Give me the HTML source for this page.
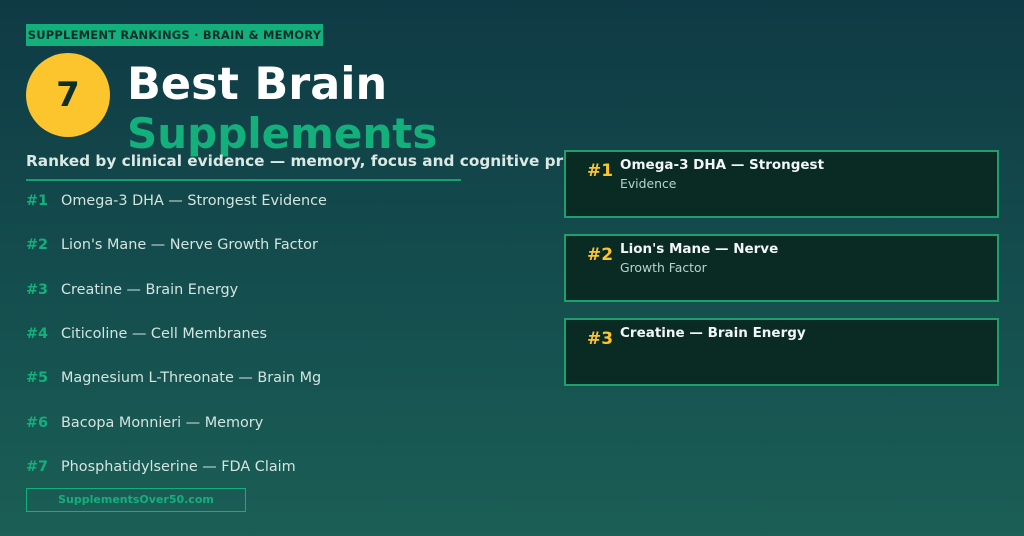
<!DOCTYPE html>
<html><head><style>
body{margin:0;width:1024px;height:536px;overflow:hidden;background:linear-gradient(180deg,#0f3a45 0%,#15504f 60%,#1b5f56 100%);font-family:"DejaVu Sans","Liberation Sans",sans-serif;position:relative}
.a{position:absolute;white-space:nowrap}
.tag{left:26px;top:24px;width:297px;height:22px;background:#14b07c;color:#0b2e2a;font-size:11.5px;font-weight:bold;line-height:22px;text-align:center;letter-spacing:0.2px}
.circ{left:26px;top:53px;width:84px;height:84px;border-radius:50%;background:#fcc42d;color:#0c2f2a;font-size:34px;font-weight:bold;text-align:center;line-height:84px}
.t1{left:127px;top:59px;font-size:44.5px;font-weight:bold;color:#fff}
.t2{left:127px;top:109px;font-size:42px;font-weight:bold;color:#14b07c}
.sub{left:26px;top:152px;font-size:15.3px;font-weight:bold;color:#dce8e4}
.line{left:26px;top:179px;width:435px;height:2px;background:#14a070}
.li{left:26px;font-size:14.4px;color:#d4e4de}
.li b{color:#14b07c;display:inline-block;width:35px}
.foot{left:26px;top:488px;width:218px;height:22px;border:1px solid #14b07c;color:#14b07c;font-size:11px;font-weight:bold;line-height:22px;text-align:center}
.card{left:564px;width:431px;height:64px;border:2px solid #1f9e6e;background:#0a2b24}
.card .n{position:absolute;left:21px;top:9px;font-size:17px;font-weight:bold;color:#fcc42d}
.card .h{position:absolute;left:54px;top:5px;font-size:13.5px;font-weight:bold;color:#f2f6f4}
.card .s{position:absolute;left:54px;top:24px;font-size:12.4px;color:#b8d4cc}
</style></head><body>
<div class="a tag">SUPPLEMENT RANKINGS · BRAIN &amp; MEMORY</div>
<div class="a circ">7</div>
<div class="a t1">Best Brain</div>
<div class="a t2">Supplements</div>
<div class="a sub">Ranked by clinical evidence — memory, focus and cognitive pr</div>
<div class="a line"></div>
<div class="a li" style="top:193px"><b>#1</b>Omega-3 DHA — Strongest Evidence</div>
<div class="a li" style="top:237px"><b>#2</b>Lion's Mane — Nerve Growth Factor</div>
<div class="a li" style="top:282px"><b>#3</b>Creatine — Brain Energy</div>
<div class="a li" style="top:326px"><b>#4</b>Citicoline — Cell Membranes</div>
<div class="a li" style="top:370px"><b>#5</b>Magnesium L-Threonate — Brain Mg</div>
<div class="a li" style="top:415px"><b>#6</b>Bacopa Monnieri — Memory</div>
<div class="a li" style="top:459px"><b>#7</b>Phosphatidylserine — FDA Claim</div>
<div class="a foot">SupplementsOver50.com</div>
<div class="a card" style="top:150px"><div class="n">#1</div><div class="h">Omega-3 DHA — Strongest</div><div class="s">Evidence</div></div>
<div class="a card" style="top:234px"><div class="n">#2</div><div class="h">Lion's Mane — Nerve</div><div class="s">Growth Factor</div></div>
<div class="a card" style="top:318px"><div class="n">#3</div><div class="h">Creatine — Brain Energy</div></div>
</body></html>
